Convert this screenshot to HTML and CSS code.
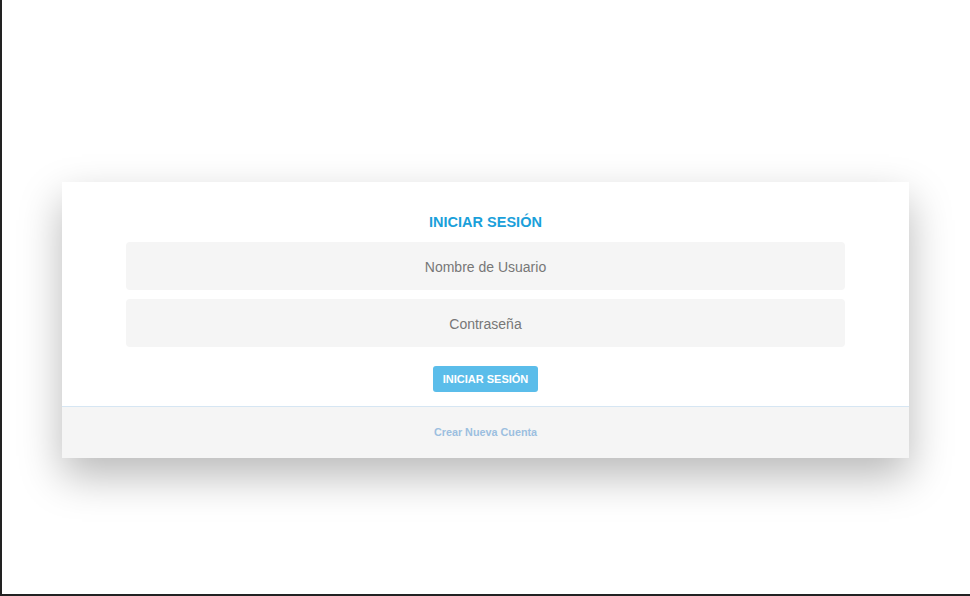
FILE: index.html
```html
<!DOCTYPE html>
<html lang="es">
<head>
<meta charset="utf-8">
<title>Iniciar Sesión</title>
<link rel="stylesheet" href="styles.css">
</head>
<body>
<div class="frame">
  <div class="card">
    <div class="card-body">
      <h1 class="title">INICIAR SESIÓN</h1>
      <input class="field" type="text" placeholder="Nombre de Usuario">
      <input class="field" type="password" placeholder="Contraseña">
      <button class="btn" type="button">INICIAR SESIÓN</button>
    </div>
    <div class="card-footer">
      <a class="link" href="#">Crear Nueva Cuenta</a>
    </div>
  </div>
</div>
</body>
</html>
```
FILE: styles.css
```css
* { box-sizing: border-box; }
html, body { margin: 0; padding: 0; background: #fff; }
body { font-family: "Liberation Sans", Arial, sans-serif; }
.frame {
  width: 970px;
  height: 596px;
  border-left: 2px solid #222;
  border-bottom: 2px solid #222;
  padding-top: 182px;
  padding-left: 60px;
}
.card {
  width: 847px;
  background: #fff;
  box-shadow: 0 18px 40px rgba(0,0,0,0.28);
}
.card-body {
  padding: 31px 64px 14px;
  display: flex;
  flex-direction: column;
  align-items: center;
}
.title {
  margin: 0 0 11px;
  font-size: 14.5px;
  font-weight: bold;
  color: #1aa0da;
  line-height: 18px;
}
.field {
  width: 100%;
  height: 48px;
  border: none;
  border-radius: 4px;
  background: #f5f5f5;
  text-align: center;
  font-family: "Liberation Sans", Arial, sans-serif;
  font-size: 14px;
  color: #777;
  margin-bottom: 9px;
  padding: 2px 0 0;
  outline: none;
}
.field::placeholder { color: #777; }
.btn {
  margin-top: 10px;
  width: 105px;
  height: 26px;
  border: none;
  border-radius: 3px;
  background: #5bbdea;
  color: #fff;
  font-family: "Liberation Sans", Arial, sans-serif;
  font-weight: bold;
  font-size: 11px;
  padding: 0;
}
.card-footer {
  border-top: 1px solid #d6e6f3;
  background: #f5f5f5;
  height: 52px;
  padding-bottom: 2px;
  display: flex;
  align-items: center;
  justify-content: center;
}
.link {
  font-size: 10.8px;
  font-weight: bold;
  color: #9cbfe0;
  text-decoration: none;
}
```
